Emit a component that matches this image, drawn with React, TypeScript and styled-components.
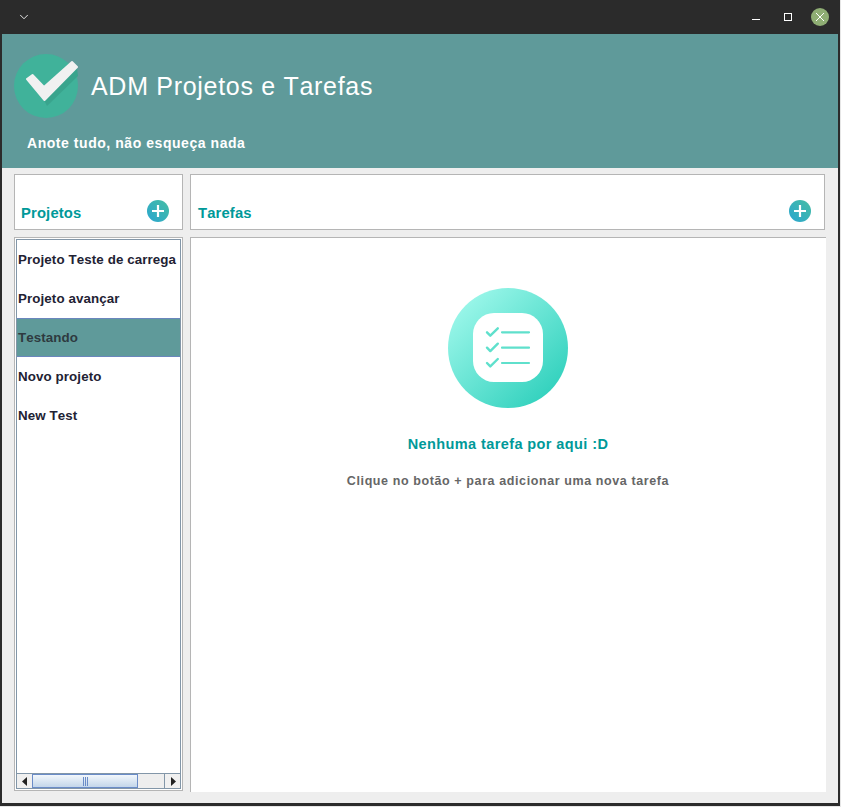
import React from "react";
import styled, { createGlobalStyle } from "styled-components";
import { ChevronDown } from "lucide-react";

const Global = createGlobalStyle`
  html, body { margin: 0; padding: 0; background: #e6e6e6; }
  * { box-sizing: border-box; }
  #root { width: 841px; height: 807px; overflow: hidden; }
`;
const Window = styled.div`
  width: 840px; height: 806px; display: flex; flex-direction: column;
  background: #2b2b2b; padding: 0 2px 0 2px;
  font-family: "Liberation Sans", Arial, sans-serif; font-kerning: none;
`;
const TitleBar = styled.div`
  height: 34px; flex: none; margin: 0 -2px; padding: 0 11px 0 17px; display: flex; align-items: center;
  justify-content: space-between; color: #fff;
`;
const WinControls = styled.div`display: flex; align-items: center;`;
const MinBtn = styled.span`width: 8px; height: 1px; background: #fff; margin: 5px 24px 0 0;`;
const MaxBtn = styled.span`width: 8px; height: 8px; border: 1px solid #fff; margin-right: 19px;`;
const CloseBtn = styled.span`
  width: 18px; height: 18px; border-radius: 50%; background: #8fae74; display: flex; align-items: center; justify-content: center;
`;
const Header = styled.header`
  height: 134px; flex: none; background: #5f9a9a; padding: 20px 0 0 12px; color: #fff;
`;
const Brand = styled.div`display: flex; align-items: center; gap: 13px;`;
const Title = styled.h1`margin: 0; font-size: 25px; font-weight: 400; letter-spacing: 0.7px; line-height: 28px;`;
const Tagline = styled.p`margin: 17px 0 0 13px; font-size: 14px; font-weight: 700; line-height: 17px; letter-spacing: 0.55px;`;
const Content = styled.main`
  height: 635px; flex: none; background: #eeeeee; padding: 6px 0 0 12px;
  display: grid; grid-template-columns: 169px 635px; grid-template-rows: 56px 555px; column-gap: 7px; row-gap: 7px;
`;
const ToolPanel = styled.section<{ $inset: number }>`
  background: #fff; border: 1px solid #b5b5b5; display: flex; align-items: flex-end; justify-content: space-between;
  padding: 0 13px 7px ${p => p.$inset}px;
`;
const ToolTitle = styled.h2`margin: 0; font-size: 14.8px; font-weight: 700; color: #009999; line-height: 17px; letter-spacing: 0.15px;`;
const AddButton = styled.button`
  width: 22px; height: 22px; border: 0; padding: 0; border-radius: 50%; display: block;
  background: linear-gradient(45deg, #2ba6d0, #45bda3);
`;
const ListFrame = styled.section`
  background: #fff; border: 1px solid #b5b5b5; padding: 1px; height: 554px; display: flex;
`;
const ListInner = styled.div`
  flex: 1; border: 1px solid #8296a8; display: flex; flex-direction: column; justify-content: space-between; min-width: 0;
`;
const List = styled.ul`margin: 0; padding: 0; list-style: none; overflow: hidden;`;
const Item = styled.li<{ $selected?: boolean }>`
  height: 39px; display: flex; align-items: center; padding-left: 1px; white-space: nowrap;
  font-size: 13.35px; font-weight: 700; color: #222233; letter-spacing: 0.1px;
  ${p => p.$selected ? "background: #5f9a9a; border-top: 1px solid #6a86bd; border-bottom: 1px solid #6a86bd; color: #2e3a40;" : ""}
`;
const ScrollBar = styled.div`
  height: 15px; display: flex; border-top: 1px solid #8296a8; background: #eeeeee;
`;
const Arrow = styled.div`
  width: 15px; display: flex; align-items: center; justify-content: center; background: #f0f0f0;
  &:last-child { border-left: 1px solid #8296a8; width: 16px; }
`;
const Thumb = styled.div`
  width: 106px; border: 1px solid #6a8cc8; background: linear-gradient(#f2f7fc, #c3d6ea);
  display: flex; align-items: center; justify-content: center; gap: 1px;
`;
const Grip = styled.i`display: block; width: 1px; height: 9px; background: #6a8cc8;`;
const Track = styled.div`flex: 1;`;
const Empty = styled.section`
  background: #fff; border: 1px solid #b5b5b5; border-bottom: 0; border-right: 0; margin-right: -1px;
  display: flex; flex-direction: column; align-items: center; padding: 50px 1px 0 0;
`;
const EmptyTitle = styled.h3`margin: 28px 0 0; font-size: 14.5px; font-weight: 700; line-height: 17px; color: #009999; letter-spacing: 0.4px;`;
const EmptyText = styled.p`margin: 21px 0 0; font-size: 12.5px; font-weight: 700; line-height: 15px; color: #666666; letter-spacing: 0.6px;`;

const Plus = () => (
  <svg width="22" height="22" viewBox="0 0 22 22">
    <path d="M11 5v12M5 11h12" stroke="#fff" strokeWidth="2.2" />
  </svg>
);
const Logo = () => (
  <svg width="64" height="64" viewBox="0 0 64 64">
    <circle cx="32" cy="32" r="32" fill="#40b29a" />
    <path d="M30 46 L63 14 L64 22 L33 52 Z" fill="#39a48d" />
    <path d="M13 25 L18.500 21 L30 33 L58 8 L63 13 L30.500 46 Z" fill="#f1f1f1" stroke="#f1f1f1" strokeWidth="2" strokeLinejoin="round" />
  </svg>
);
const Check = ({ y }: { y: number }) => (
  <path d={`M39 ${y} l3.300 3.400 l7.500 -7.400`} fill="none" stroke="#5fe0cc" strokeWidth="2.4" strokeLinecap="round" strokeLinejoin="round" />
);
const EmptyIcon = () => (
  <svg width="120" height="120" viewBox="0 0 120 120">
    <defs>
      <linearGradient id="g" x1="0.12" y1="0.1" x2="0.9" y2="0.9">
        <stop offset="0" stopColor="#9cf7ea" />
        <stop offset="1" stopColor="#2fd0bc" />
      </linearGradient>
    </defs>
    <circle cx="60" cy="60" r="60" fill="url(#g)" />
    <rect x="25" y="25" width="70" height="69" rx="21" fill="#fff" />
    <Check y={44.3} /><Check y={59.7} /><Check y={75} />
    <path d="M54 44.300h27M54 59.700h27M54 75h27" stroke="#5fe0cc" strokeWidth="2.2" strokeLinecap="round" />
  </svg>
);

const projects = ["Projeto Teste de carrega", "Projeto avançar", "Testando", "Novo projeto", "New Test"];

export default function App() {
  return (
    <Window>
      <Global />
      <TitleBar>
        <ChevronDown size={14} strokeWidth={1.5} />
        <WinControls>
          <MinBtn />
          <MaxBtn />
          <CloseBtn>
            <svg width="10" height="10" viewBox="0 0 10 10"><path d="M1 1l8 8M9 1l-8 8" stroke="#fff" strokeWidth="1" /></svg>
          </CloseBtn>
        </WinControls>
      </TitleBar>
      <Header>
        <Brand>
          <Logo />
          <Title>ADM Projetos e Tarefas</Title>
        </Brand>
        <Tagline>Anote tudo, não esqueça nada</Tagline>
      </Header>
      <Content>
        <ToolPanel $inset={6}>
          <ToolTitle>Projetos</ToolTitle>
          <AddButton aria-label="Adicionar projeto"><Plus /></AddButton>
        </ToolPanel>
        <ToolPanel $inset={7}>
          <ToolTitle>Tarefas</ToolTitle>
          <AddButton aria-label="Adicionar tarefa"><Plus /></AddButton>
        </ToolPanel>
        <ListFrame>
          <ListInner>
            <List>
              {projects.map((p, i) => <Item key={p} $selected={i === 2}>{p}</Item>)}
            </List>
            <ScrollBar>
              <Arrow><svg width="6" height="9" viewBox="0 0 6 9"><path d="M5 0v9L0 4.500z" fill="#222" /></svg></Arrow>
              <Thumb><Grip /><Grip /><Grip /></Thumb>
              <Track />
              <Arrow><svg width="6" height="9" viewBox="0 0 6 9"><path d="M1 0v9l5-4.500z" fill="#222" /></svg></Arrow>
            </ScrollBar>
          </ListInner>
        </ListFrame>
        <Empty>
          <EmptyIcon />
          <EmptyTitle>Nenhuma tarefa por aqui :D</EmptyTitle>
          <EmptyText>Clique no botão + para adicionar uma nova tarefa</EmptyText>
        </Empty>
      </Content>
    </Window>
  );
}
